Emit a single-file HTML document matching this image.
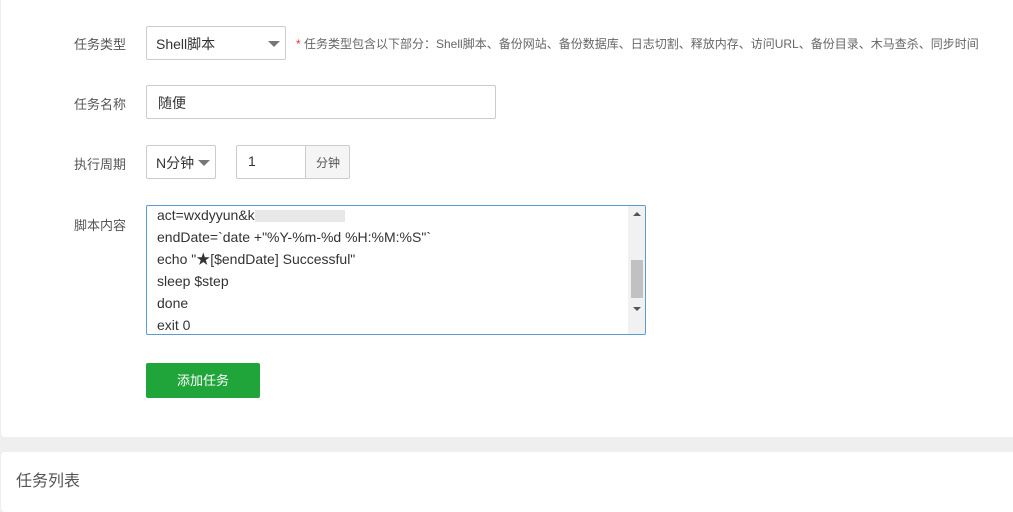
<!DOCTYPE html>
<html><head><meta charset="utf-8"><style>
*{box-sizing:border-box;margin:0;padding:0}
body{width:1013px;height:492px;background:#efefef;font-family:"Liberation Sans","Noto Sans CJK SC",sans-serif;font-size:13px;color:#555;position:relative;overflow:hidden}
.p1{position:absolute;left:1px;top:0;width:1020px;height:437px;background:#fff;border-radius:0 0 4px 4px}
.p2{position:absolute;left:1px;top:452px;width:1020px;height:60px;background:#fff;border-radius:4px}
.lbl{position:absolute;left:60px;width:66px;text-align:right;color:#555;font-size:13px}
.box{position:absolute;border:1px solid #ccc;background:#fff;border-radius:2px;color:#333;font-size:13px}
.tri{position:absolute;width:0;height:0;border-left:6px solid transparent;border-right:6px solid transparent;border-top:6px solid #777}
</style></head><body>
<div class="p1"></div>
<div class="lbl" style="top:34px">任务类型</div>
<div class="box" style="left:146px;top:26px;width:140px;height:34px;padding:7px 0 0 9px;font-size:14px">Shell脚本<div class="tri" style="left:121px;top:14px"></div></div>
<div style="position:absolute;left:296px;top:35px;font-size:12px;color:#666"><span style="color:#e33">*</span> 任务类型包含以下部分：Shell脚本、备份网站、备份数据库、日志切割、释放内存、访问URL、备份目录、木马查杀、同步时间</div>
<div class="lbl" style="top:94px">任务名称</div>
<div class="box" style="left:146px;top:85px;width:350px;height:34px;padding:7px 0 0 11px;font-size:14px">随便</div>
<div class="lbl" style="top:154px">执行周期</div>
<div class="box" style="left:146px;top:145px;width:70px;height:34px;padding:7px 0 0 9px;font-size:14px">N分钟<div class="tri" style="left:51px;top:14px"></div></div>
<div class="box" style="left:236px;top:145px;width:70px;height:34px;padding:7px 0 0 11px;border-radius:2px 0 0 2px;font-size:14px">1</div>
<div class="box" style="left:305px;top:145px;width:45px;height:34px;padding:8px 0 0 10px;background:#f5f5f5;font-size:12px;color:#555;border-radius:0 2px 2px 0">分钟</div>
<div class="lbl" style="top:215px">脚本内容</div>
<div class="box" style="left:146px;top:205px;width:500px;height:130px;border:1px solid #5b9bd5;overflow:hidden;line-height:22px;color:#333;font-size:14px">
<div style="position:absolute;left:10px;top:-2px;white-space:pre">act=wxdyyun&amp;k<span style="display:inline-block;width:90px;height:12px;background:#e8e8e8;vertical-align:middle"></span>
endDate=`date +"%Y-%m-%d %H:%M:%S"`
echo "★[$endDate] Successful"
sleep $step
done
exit 0</div>
<div style="position:absolute;right:0;top:0;width:17px;height:128px;background:#f1f1f1"></div>
<div style="position:absolute;right:2px;top:54px;width:12px;height:38px;background:#c1c1c1"></div>
<div class="tri" style="right:4px;top:6px;border-width:0 4px 4px 4px;border-color:transparent transparent #555 transparent;border-style:solid"></div>
<div class="tri" style="right:4px;top:101px;border-width:4px 4px 0 4px;border-top-color:#555"></div>
</div>
<div style="position:absolute;left:146px;top:363px;width:114px;height:35px;background:#20a53a;border-radius:2px;color:#fff;text-align:center;line-height:35px;font-size:13px">添加任务</div>
<div class="p2"></div>
<div style="position:absolute;left:16px;top:467px;font-size:16px;color:#555">任务列表</div>
</body></html>
